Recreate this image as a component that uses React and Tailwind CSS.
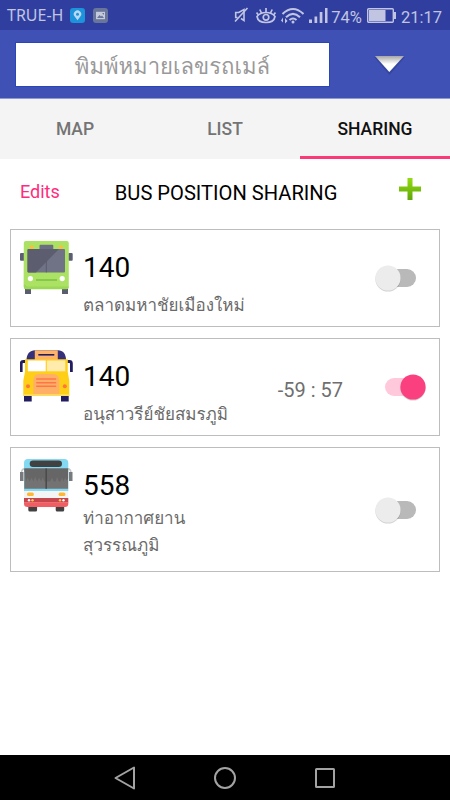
import React, { useState } from "react";

const initialBuses = [
  {
    id: 1,
    number: "140",
    stop: ["ตลาดมหาชัยเมืองใหม่"],
    icon: GreenBus,
    time: "",
    on: false,
  },
  {
    id: 2,
    number: "140",
    stop: ["อนุสาวรีย์ชัยสมรภูมิ"],
    icon: SchoolBus,
    time: "-59 : 57",
    on: true,
  },
  {
    id: 3,
    number: "558",
    stop: ["ท่าอากาศยาน", "สุวรรณภูมิ"],
    icon: RedBus,
    time: "",
    on: false,
  },
];

function GreenBus() {
  return (
    <svg viewBox="0 0 53 53" className="block h-[53px] w-[53px]">
      <path d="M5 46h6v7H5zM42 46h6v7h-6z" fill="#5a5d6e" />
      <rect x="0" y="12" width="5" height="7.7" rx="1" fill="#5c5f74" />
      <rect x="48" y="12" width="4.7" height="7.7" rx="1" fill="#5c5f74" />
      <rect x="3.8" y="0" width="45" height="48" rx="2" fill="#ace263" />
      <path d="M4 5v38l6 5H5.800a2 2 0 0 1-2-2z" fill="#9bd856" />
      <path d="M4 45.500h44.600v.8a2 2 0 0 1-2 2H6a2 2 0 0 1-2-2z" fill="#9bd856" />
      <circle cx="11.700" cy="6.200" r="2" fill="#fbbf3b" />
      <circle cx="40.900" cy="6.200" r="2" fill="#fbbf3b" />
      <rect x="19.500" y="3.800" width="13.800" height="5" rx="1" fill="#6b6e83" />
      <rect x="7.500" y="8" width="37.500" height="23.400" rx="1" fill="#707386" />
      <path d="M8.500 8H39L16 31.400H8.500a1 1 0 0 1-1-1V9a1 1 0 0 1 1-1z" fill="#5c5e70" />
      <path d="M26.300 20v11.400" stroke="#5a5c6d" strokeWidth="1" />
      <circle cx="10.400" cy="37.600" r="2.600" fill="#fff" />
      <circle cx="42.200" cy="37.600" r="2.600" fill="#fff" />
      <path d="M16 39h21" stroke="#84c44c" strokeWidth="1.800" />
    </svg>
  );
}

function SchoolBus() {
  return (
    <svg viewBox="0 0 53 53" className="block h-[53px] w-[53px]">
      <path d="M4 44h7.700v7.600H4zM41 44h7.700v7.600H41z" fill="#211d5e" />
      <path
        d="M1.200 22v-8.500q0-2 2-2h2M51.400 22v-8.500q0-2-2-2h-2"
        fill="none"
        stroke="#211d5e"
        strokeWidth="2.800"
      />
      <path d="M6.500 10C6.500 4 10 .3 15 .3h23c5 0 8 3.700 8 9.700z" fill="#353079" />
      <path d="M14.800 .3h23V10h-23z" fill="#ffb36a" />
      <path d="M18.300 4.800h16" stroke="#211d5e" strokeWidth="1.600" />
      <path d="M5 9.300h42.700v12.500l1.600 9V46h-46V30.800l1.700-9z" fill="#ffcf17" />
      <path d="M7.800 10.500h17.900v10.800H7.800z" fill="#fff" />
      <path d="M26.800 10.500h18.500v10.800H26.800z" fill="#ffebab" />
      <path d="M13.300 45V31q0-7 6-7h14q6 0 6 7v14z" fill="#ffb066" />
      <path d="M16.200 29h20M16.200 32.700h20M16.200 36.300h20" stroke="#ff7548" strokeWidth="1.500" />
      <circle cx="8" cy="36.300" r="2" fill="#ff7639" />
      <circle cx="44.800" cy="36.300" r="2" fill="#ff7639" />
      <path d="M3.300 45h46" stroke="#ffe06c" strokeWidth="1.600" />
    </svg>
  );
}

function RedBus() {
  return (
    <svg viewBox="0 0 53 53" className="block h-[53px] w-[53px]">
      <rect x="8.300" y="45" width="8.800" height="7.400" rx="1.500" fill="#414141" />
      <rect x="35.700" y="45" width="8.500" height="7.400" rx="1.500" fill="#414141" />
      <path d="M5 9.500Q1.500 10 1.500 14v7.500M47.500 9.500q3.500.5 3.500 4.500v7.500" fill="none" stroke="#c4c8ca" strokeWidth="1.500" />
      <path d="M0 13h3.500v9H0zM49 13h3.500v9H49z" fill="#777b7d" />
      <path d="M4 32V4q0-4 4-4h36.300q4 0 4 4v28z" fill="#83d9f1" />
      <rect x="9.700" y="1.400" width="32.300" height="6.600" rx="3.300" fill="#414141" />
      <path d="M4.300 9.500h43.800v20.200H4.300z" fill="#737373" />
      <path
        d="M4.300 9.500h43.800v10l-1.500 2-1.500-3-1.500 4-1.500-4-1.500 4h-2l-1.500-5-1.500 5h-2l-1.500-4-2 4h-5.500l-2-4-1.500 4-2-4-2 4-2-5-1.500 5-2-4-2 4-2-4-1.500 4z"
        fill="#666"
      />
      <path d="M26.200 9.500v20.200" stroke="#4b4b4b" strokeWidth="1.600" />
      <path d="M4 32h44.300v7H4z" fill="#f4f4f4" />
      <rect x="7" y="33.600" width="6.800" height="3.400" rx="1.500" fill="#ffb633" />
      <rect x="38.600" y="33.600" width="6.800" height="3.400" rx="1.500" fill="#ffb633" />
      <path d="M4 39h44.300v4.500H4z" fill="#c5464d" />
      <path d="M4 43.300h44.300v1.500q0 3.200-3.500 3.200H7.500Q4 48 4 44.800z" fill="#f05e63" />
      <circle cx="9" cy="41.200" r="1.200" fill="#fff" />
      <circle cx="12.500" cy="41.200" r="1.200" fill="#ffcb4c" />
      <circle cx="40" cy="41.200" r="1.200" fill="#ffcb4c" />
      <circle cx="43.500" cy="41.200" r="1.200" fill="#fff" />
    </svg>
  );
}

function StatusBar() {
  return (
    <div className="flex h-[30px] items-center bg-[#303f9f] pl-[7px] pr-2 text-[#c1c5e2]">
      <span className="font-['Noto_Sans'] text-[16px] leading-[30px]">TRUE-H</span>
      <svg viewBox="0 0 15 15" className="ml-[7px] h-[15px] w-[15px]">
        <rect width="15" height="15" rx="3" fill="#1d93dc" />
        <path d="M7.500 12.200 4.700 8.500a3.700 3.700 0 1 1 5.600 0z" fill="#b9d9f2" />
        <circle cx="7.500" cy="6.200" r="1.500" fill="#1d93dc" />
      </svg>
      <svg viewBox="0 0 15 15" className="ml-2 h-[15px] w-[15px]">
        <rect width="15" height="15" rx="3" fill="#69759a" />
        <path d="M3 3.800h9v7.400H3z" fill="#c5cbdc" />
        <path d="m4 10 2.500-3 1.500 1.500 1-1 2 2.500zM9 5h2v2z" fill="#69759a" />
      </svg>

      <div className="ml-auto flex items-center">
        {/* Muted speaker */}
        <svg viewBox="0 0 16 16" className="h-4 w-4" fill="none" stroke="currentColor" strokeWidth="1.600">
          <path d="M4.500 10.500H2.700v-5h3L11 2.500v11L8 11.500" />
          <path d="M14.500 1 2 14.500" />
        </svg>
        {/* Eye comfort */}
        <svg viewBox="0 0 20 17" className="ml-[7px] h-[17px] w-5" fill="none" stroke="currentColor" strokeWidth="1.700">
          <path d="M1 9.500Q2 15.500 10 15.500T19 9.500Q16 5.500 10 5.500T1 9.500z" />
          <circle cx="10" cy="10.300" r="2.800" />
          <path d="M10 5V1M5.500 6 3.800 2.500M14.500 6l1.700-3.500M2.500 8 .5 5.500M17.500 8l2-2.500" />
        </svg>
        {/* Wifi */}
        <svg viewBox="0 0 23 17" className="ml-[5px] h-[17px] w-[23px]" fill="none" stroke="currentColor" strokeWidth="2.100">
          <path d="M1.500 7q10.500-10 21 0M5 10.200q7-6.500 14 0M8.500 13q3.500-3 7 0" />
          <circle cx="12" cy="15" r="1.500" fill="currentColor" stroke="none" />
          <path d="M0 13.500 2 10.500v5zM4 11l2.500 3L4 16.500z" fill="currentColor" stroke="none" />
        </svg>
        {/* Signal */}
        <svg viewBox="0 0 19 16" className="ml-[5px] h-4 w-[19px]" fill="currentColor">
          <path d="M0 12.500h3V16H0zM5.500 9.500h2.700V16H5.500zM10.700 5h2.700v11h-2.700zM16 1h2.500v15H16z" />
        </svg>
        <span className="ml-[3px] mt-[5px] text-[16.500px] leading-[25px]">74%</span>
        <svg viewBox="0 0 29 15" className="ml-[5px] h-[15px] w-[29px]">
          <rect x=".7" y=".7" width="25.600" height="13.600" rx="1" fill="none" stroke="currentColor" strokeWidth="1.400" />
          <path d="M2 2h16.500v11H2z" fill="currentColor" />
          <path d="M27 4h2v7h-2z" fill="currentColor" />
        </svg>
        <span className="ml-[5px] mt-[5px] text-[16.500px] leading-[25px]">21:17</span>
      </div>
    </div>
  );
}

function Toggle({ on, onClick }) {
  return (
    <button onClick={onClick} className={on ? "mr-[13px]" : "mr-[22px]"}>
      <svg viewBox="0 0 42 30" className="block h-[30px] w-[42px] overflow-visible">
        <rect x={on ? 1 : 5} y="6" width={on ? 34 : 36} height="18" rx="9" fill={on ? "#ffc9db" : "#b9b9b9"} />
        <circle cx={on ? 29 : 13} cy="16" r="12.600" fill="#000" opacity=".18" />
        <circle cx={on ? 29 : 13} cy="15" r="12.600" fill={on ? "#fb407f" : "#ececec"} />
      </svg>
    </button>
  );
}

function BusCard({ bus, onToggle }) {
  const Icon = bus.icon;
  const twoLines = bus.stop.length > 1;

  return (
    <div className="flex border border-[#bdbdbd] bg-white pl-[9px]">
      <div className="pt-[11px]">
        <Icon />
      </div>
      <div className="ml-[10px] flex-1 pt-[20px]">
        <div className="text-[28px] leading-[36px] text-black">{bus.number}</div>
        <div
          className={`whitespace-nowrap text-[17px] leading-[27px] text-[#6a6a6a] ${
            twoLines ? "pb-[12px] pt-px" : "pb-[7px] pt-[6px]"
          }`}
        >
          {bus.stop.map((line) => (
            <div key={line}>{line}</div>
          ))}
        </div>
      </div>
      {bus.time && (
        <div className="mr-[41px] self-center pt-[5px] text-[20px] leading-6 text-[#6f6f6f]">{bus.time}</div>
      )}
      <div className="flex items-center">
        <Toggle on={bus.on} onClick={onToggle} />
      </div>
    </div>
  );
}

export default function App() {
  const [buses, setBuses] = useState(initialBuses);
  const [tab, setTab] = useState("SHARING");

  const toggleBus = (id) => {
    setBuses((list) => list.map((b) => (b.id === id ? { ...b, on: !b.on } : b)));
  };

  return (
    <div className="flex h-[800px] w-[450px] flex-col overflow-hidden bg-white font-['Roboto','Loma','Noto_Sans',sans-serif]">
      <StatusBar />

      {/* Search */}
      <header className="flex h-[69px] items-start border-b border-[#8f99d3] bg-[#3f51b5] pl-[15px] pt-3">
        <input
          placeholder="พิมพ์หมายเลขรถเมล์"
          className="h-[45px] w-[315px] border border-[#2a45b5] bg-white pt-[2px] text-center text-[22.100px] placeholder:text-[#999] focus:outline-none"
        />
        <svg viewBox="0 0 32 24" className="ml-[43px] mt-[10px] h-6 w-8">
          <defs>
            <linearGradient id="arrow" x1="0" y1="0" x2="0" y2="1">
              <stop offset="0" stopColor="#a6a6a6" />
              <stop offset=".5" stopColor="#fff" />
            </linearGradient>
          </defs>
          <path d="M1 5h31L16.500 23z" fill="#28357f" opacity=".4" />
          <path d="M2 4h29L16.300 20z" fill="url(#arrow)" />
        </svg>
      </header>

      {/* Tabs */}
      <nav className="grid h-[60px] grid-cols-3 bg-[#f4f4f4]">
        {["MAP", "LIST", "SHARING"].map((name) => (
          <button
            key={name}
            onClick={() => setTab(name)}
            className={`border-b-[3px] pt-[3px] text-[17.500px] font-medium ${
              tab === name ? "border-[#fb3a78] text-[#111]" : "border-transparent text-[#747474]"
            }`}
          >
            {name}
          </button>
        ))}
      </nav>

      <div className="flex h-[70px] items-start pl-5 pr-[29px]">
        <button className="mt-[21px] text-[18px] leading-6 text-[#ff2b7d]">Edits</button>
        <h1 className="ml-[55px] mt-[22px] text-[20.150px] leading-6 text-black">BUS POSITION SHARING</h1>
        <svg viewBox="0 0 22 22" className="ml-auto mt-[19px] h-[22px] w-[22px]">
          <defs>
            <linearGradient id="plus" x1="0" y1="0" x2="0" y2="1">
              <stop offset="0" stopColor="#94dc10" />
              <stop offset="1" stopColor="#5fa60b" />
            </linearGradient>
          </defs>
          <path d="M8.500 0h5v8.500H22v5h-8.500V22h-5v-8.500H0v-5h8.500z" fill="url(#plus)" />
        </svg>
      </div>

      <main className="flex flex-1 flex-col gap-[11px] px-[10px]">
        {buses.map((bus) => (
          <BusCard key={bus.id} bus={bus} onToggle={() => toggleBus(bus.id)} />
        ))}
      </main>

      {/* Android navigation */}
      <footer className="flex h-[45px] items-center justify-between bg-black px-[113px]">
        <svg viewBox="0 0 24 24" className="h-6 w-6" fill="none" stroke="#a3a3a3" strokeWidth="2" strokeLinejoin="round">
          <path d="M21 1.500v21L2.500 12z" />
        </svg>
        <svg viewBox="0 0 24 24" className="h-6 w-6" fill="none" stroke="#a3a3a3" strokeWidth="2">
          <circle cx="12" cy="12" r="10" />
        </svg>
        <svg viewBox="0 0 24 24" className="h-6 w-6" fill="none" stroke="#a3a3a3" strokeWidth="2">
          <rect x="3" y="3" width="18" height="18" rx=".5" />
        </svg>
      </footer>
    </div>
  );
}
